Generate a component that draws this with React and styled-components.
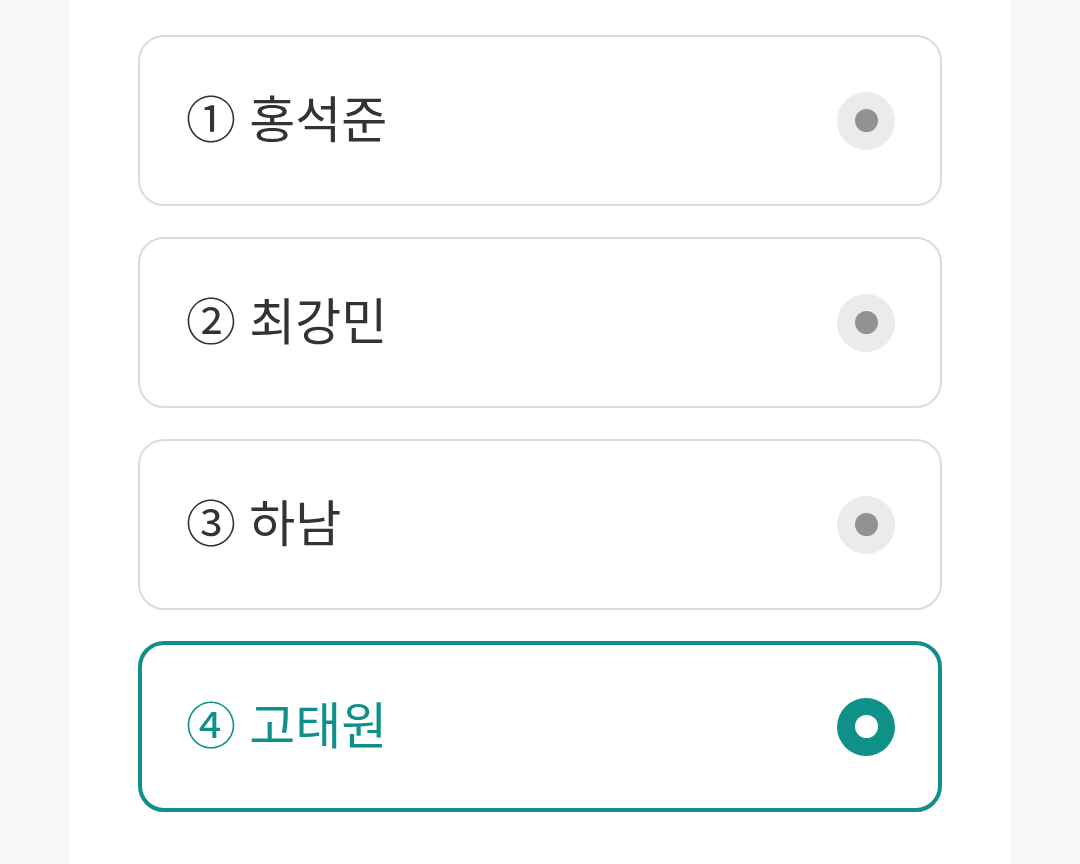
import React, { useState } from 'react'
import styled, { createGlobalStyle } from 'styled-components'

const GlobalStyle = createGlobalStyle`
  html, body {
    margin: 0;
    padding: 0;
    background: #f8f9f9;
  }
  body {
    font-family: "Noto Sans CJK KR", "Noto Sans", sans-serif;
  }
`

const options = ['① 홍석준', '② 최강민', '③ 하남', '④ 고태원']

function App() {
  const [selected, setSelected] = useState(3)

  return (
    <>
      <GlobalStyle />
      <Page>
        <Panel>
          {options.map((label, i) => (
            <Option key={label} active={selected === i} onClick={() => setSelected(i)}>
              <Label active={selected === i}>{label}</Label>
              <Radio active={selected === i} />
            </Option>
          ))}
        </Panel>
      </Page>
    </>
  )
}

const Page = styled.div`
  min-height: 864px;
  display: flex;
  justify-content: center;
`

const Panel = styled.div`
  width: 942px;
  min-height: 864px;
  box-sizing: border-box;
  background: #fff;
  padding: 35px 69px 0;
  display: flex;
  flex-direction: column;
  gap: 31px;
  box-shadow: 0 0 24px rgba(0, 0, 0, 0.025);
`

const Option = styled.div`
  box-sizing: border-box;
  height: 171px;
  border: ${p => (p.active ? '4px solid #0f918a' : '2px solid #dcdcdc')};
  border-radius: 26px;
  padding: ${p => (p.active ? '0 43px 0 44px' : '0 45px 0 46px')};
  display: flex;
  align-items: center;
  justify-content: space-between;
  cursor: pointer;
`

const Label = styled.span`
  font-size: 50px;
  line-height: 1;
  padding-bottom: 10px;
  color: ${p => (p.active ? '#0f918a' : '#333')};
  word-spacing: 2px;
`

const Radio = styled.span`
  width: 58px;
  height: 58px;
  border-radius: 50%;
  background: ${p => (p.active ? '#0f918a' : '#ebebeb')};
  display: flex;
  align-items: center;
  justify-content: center;

  &::after {
    content: '';
    width: 23px;
    height: 23px;
    border-radius: 50%;
    background: ${p => (p.active ? '#fff' : '#929292')};
  }
`

export default App
